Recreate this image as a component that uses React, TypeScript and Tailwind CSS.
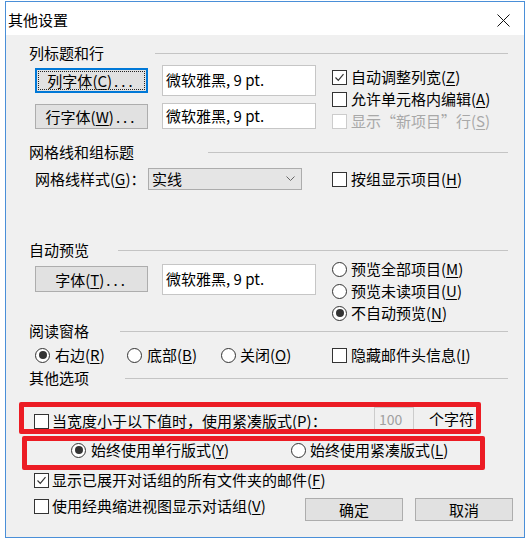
import React from 'react';

const Check: React.FC<{ checked?: boolean; disabled?: boolean }> = ({ checked, disabled }) => (
  <span
    className={`w-[15px] h-[15px] shrink-0 bg-white border flex items-center justify-center ${
      disabled ? 'border-[#cccccc]' : 'border-[#333333]'
    }`}
  >
    {checked && (
      <svg width="11" height="11" viewBox="0 0 11 11">
        <path d="M1.5 5.5 L4.3 8.3 L9.5 2.2" stroke="#333333" strokeWidth="1.2" fill="none" />
      </svg>
    )}
  </span>
);

const Radio: React.FC<{ checked?: boolean }> = ({ checked }) => (
  <span className="w-[15px] h-[15px] shrink-0 rounded-full bg-white border border-[#333333] flex items-center justify-center">
    {checked && <span className="w-[8px] h-[8px] rounded-full bg-[#333333]" />}
  </span>
);

const Key: React.FC<{ k: string }> = ({ k }) => (
  <span>
    (<u className="underline-offset-2">{k}</u>)
  </span>
);

const Group: React.FC<{ label: string; w: string }> = ({ label, w }) => (
  <div className="flex items-center h-[17px] pl-[23px] pr-[16px]">
    <span className={`${w} shrink-0 leading-none`}>{label}</span>
    <div className="flex-1 h-px bg-[#c4c4c4] mt-[1px]" />
  </div>
);

const Button: React.FC<{ children: React.ReactNode; className?: string; focus?: boolean }> = ({
  children,
  className = '',
  focus,
}) => (
  <div
    className={`shrink-0 bg-[#e1e1e1] flex items-center justify-center leading-none ${
      focus ? 'border-2 border-[#0078d7] p-[1px]' : 'border border-[#adadad]'
    } ${className}`}
  >
    {focus ? (
      <span className="w-full h-full flex items-center justify-center outline-1 outline-dotted outline-[#222222] -outline-offset-1">
        {children}
      </span>
    ) : (
      children
    )}
  </div>
);

const TextBox: React.FC<{ className?: string }> = ({ className = '' }) => (
  <div className={`shrink-0 bg-white border border-[#c6c6c6] flex items-center pl-[3px] ${className}`}>
    微软雅黑, 9 pt.
  </div>
);

const App: React.FC = () => {
  return (
    <div className="w-[532px] h-[545px] bg-white pt-px pl-[5px] text-[15px] text-black font-['Noto_Sans_CJK_SC','Noto_Sans',sans-serif]">
      <div className="relative w-[520px] h-[537px] border border-[#4a8fd8] flex flex-col">
        <div className="h-[33px] bg-white flex items-center justify-between pl-[2px] pr-[14px] shrink-0">
          <span className="mt-[3px]">其他设置</span>
          <svg width="13" height="13" viewBox="0 0 13 13" className="mt-[3px]">
            <path d="M0.5 0.5 L12.5 12.5 M12.5 0.5 L0.5 12.5" stroke="#111111" strokeWidth="1" />
          </svg>
        </div>

        <div className="flex-1 bg-[#f0f0f0] flex flex-col pt-[9px]">
          <Group label="列标题和行" w="w-[126px]" />

          <div className="flex h-[64px] mt-[4px] pl-[29px]">
            <div className="flex flex-col w-[281px]">
              <div className="flex h-[31px]">
                <Button focus className="w-[113px] h-[25px] mt-[3px]">
                  列字体<Key k="C" />
                  <span className="tracking-[3px] ml-[2px]">...</span>
                </Button>
                <TextBox className="ml-[14px] w-[154px] h-[31px]" />
              </div>
              <div className="flex h-[26px] mt-[7px]">
                <Button className="w-[113px] h-[25px] mt-[1px]">
                  行字体<Key k="W" />
                  <span className="tracking-[3px] ml-[2px]">...</span>
                </Button>
                <TextBox className="ml-[14px] w-[154px] h-[26px]" />
              </div>
            </div>
            <div className="ml-[16px] flex flex-col pt-[1px]">
              <div className="flex items-center gap-[4px] h-[22px]">
                <Check checked />
                <span>
                  自动调整列宽<Key k="Z" />
                </span>
              </div>
              <div className="flex items-center gap-[4px] h-[22px]">
                <Check />
                <span>
                  允许单元格内编辑<Key k="A" />
                </span>
              </div>
              <div className="flex items-center gap-[4px] h-[22px] text-[#a8a8a8]">
                <Check disabled />
                <span>
                  显示“新项目”行<Key k="S" />
                </span>
              </div>
            </div>
          </div>

          <div className="mt-[14px]">
            <Group label="网格线和组标题" w="w-[179px]" />
          </div>

          <div className="flex items-center h-[22px] mt-[8px] pl-[29px]">
            <span className="w-[113px] shrink-0">
              网格线样式<Key k="G" />：
            </span>
            <div className="w-[154px] h-[22px] shrink-0 bg-[#e5e5e5] border border-[#acacac] flex items-center justify-between pl-[3px] pr-[6px]">
              <span>实线</span>
              <svg width="9" height="6" viewBox="0 0 9 6">
                <path d="M0.5 0.5 L4.5 4.5 L8.5 0.5" stroke="#666666" fill="none" />
              </svg>
            </div>
            <div className="ml-[30px] flex items-center gap-[4px]">
              <Check />
              <span>
                按组显示项目<Key k="H" />
              </span>
            </div>
          </div>

          <div className="mt-[51px]">
            <Group label="自动预览" w="w-[89px]" />
          </div>

          <div className="flex h-[64px] pl-[29px]">
            <Button className="w-[113px] h-[26px] mt-[8px]">
              字体<Key k="T" />
              <span className="tracking-[3px] ml-[2px]">...</span>
            </Button>
            <TextBox className="ml-[14px] w-[154px] h-[31px] mt-[6px]" />
            <div className="ml-[16px] flex flex-col">
              <div className="flex items-center gap-[4px] h-[22px]">
                <Radio />
                <span>
                  预览全部项目<Key k="M" />
                </span>
              </div>
              <div className="flex items-center gap-[4px] h-[22px]">
                <Radio />
                <span>
                  预览未读项目<Key k="U" />
                </span>
              </div>
              <div className="flex items-center gap-[4px] h-[22px]">
                <Radio checked />
                <span>
                  不自动预览<Key k="N" />
                </span>
              </div>
            </div>
          </div>

          <Group label="阅读窗格" w="w-[91px]" />

          <div className="flex items-center h-[22px] mt-[5px] pl-[29px]">
            <div className="w-[92px] flex items-center gap-[5px]">
              <Radio checked />
              <span>
                右边<Key k="R" />
              </span>
            </div>
            <div className="w-[94px] flex items-center gap-[5px]">
              <Radio />
              <span>
                底部<Key k="B" />
              </span>
            </div>
            <div className="w-[111px] flex items-center gap-[4px]">
              <Radio />
              <span>
                关闭<Key k="O" />
              </span>
            </div>
            <div className="flex items-center gap-[4px]">
              <Check />
              <span>
                隐藏邮件头信息<Key k="I" />
              </span>
            </div>
          </div>

          <div className="mt-[3px]">
            <Group label="其他选项" w="w-[96px]" />
          </div>

          <div className="flex items-center h-[25px] mt-[21px] pl-[28px]">
            <div className="w-[340px] flex items-center gap-[3px] mt-[3px]">
              <Check />
              <span>
                当宽度小于以下值时，使用紧凑版式<Key k="P" />：
              </span>
            </div>
            <div className="w-[40px] h-[25px] bg-[#f0f0f0] border border-[#cccccc] flex items-center pl-[4px] text-[#a0a0a0] text-[14px]">
              100
            </div>
            <span className="ml-[15px]">个字符</span>
          </div>

          <div className="flex items-center h-[22px] mt-[7px] pl-[65px]">
            <div className="w-[220px] flex items-center gap-[5px]">
              <Radio checked />
              <span>
                始终使用单行版式<Key k="Y" />
              </span>
            </div>
            <div className="flex items-center gap-[4px]">
              <Radio />
              <span>
                始终使用紧凑版式<Key k="L" />
              </span>
            </div>
          </div>

          <div className="flex items-center gap-[3px] h-[22px] mt-[8px] pl-[28px]">
            <Check checked />
            <span>
              显示已展开对话组的所有文件夹的邮件<Key k="F" />
            </span>
          </div>

          <div className="flex mt-[4px] pl-[28px]">
            <div className="w-[271px] h-[22px] flex items-center gap-[3px]">
              <Check />
              <span>
                使用经典缩进视图显示对话组<Key k="V" />
              </span>
            </div>
            <Button className="w-[98px] h-[23px] mt-[3px]">确定</Button>
            <Button className="w-[98px] h-[23px] mt-[3px] ml-[12px]">取消</Button>
          </div>
        </div>

        <div className="absolute left-[13px] top-[400px] w-[462px] h-[32px] border-[5px] border-[#ec1c24] rounded-[2px]" />
        <div className="absolute left-[16px] top-[434px] w-[463px] h-[34px] border-[5px] border-[#ec1c24] rounded-[2px]" />
      </div>
    </div>
  );
};

export default App;
